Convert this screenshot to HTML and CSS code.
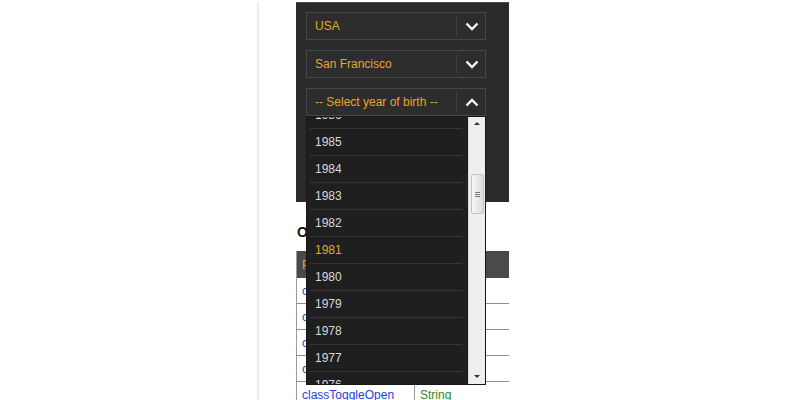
FILE: index.html
```html
<!DOCTYPE html>
<html>
<head>
<meta charset="utf-8">
<link rel="stylesheet" href="styles.css">
</head>
<body>
<div class="page">
  <div class="content">
    <div class="panel">
      <div class="select">
        <span class="value">USA</span>
        <span class="toggle"><svg width="14" height="9" viewBox="0 0 14 9"><polyline points="1.5,1.5 7,7 12.5,1.5" fill="none" stroke="#fff" stroke-width="2.4"/></svg></span>
      </div>
      <div class="select">
        <span class="value">San Francisco</span>
        <span class="toggle"><svg width="14" height="9" viewBox="0 0 14 9"><polyline points="1.5,1.5 7,7 12.5,1.5" fill="none" stroke="#fff" stroke-width="2.4"/></svg></span>
      </div>
      <div class="select open">
        <span class="value">-- Select year of birth --</span>
        <span class="toggle"><svg width="14" height="9" viewBox="0 0 14 9"><polyline points="1.5,7.5 7,2 12.5,7.5" fill="none" stroke="#fff" stroke-width="2.4"/></svg></span>
        <div class="dropdown">
          <div class="list">
            <ul class="items">
              <li>1986</li>
              <li>1985</li>
              <li>1984</li>
              <li>1983</li>
              <li>1982</li>
              <li class="selected">1981</li>
              <li>1980</li>
              <li>1979</li>
              <li>1978</li>
              <li>1977</li>
              <li>1976</li>
              <li>1975</li>
            </ul>
          </div>
          <div class="scrollbar">
            <span class="arrow up"></span>
            <span class="thumb"><span class="grip"></span></span>
            <span class="arrow down"></span>
          </div>
        </div>
      </div>
    </div>
    <h3 class="heading">Options</h3>
    <table class="options">
      <tr><th>Property</th><th>Type</th></tr>
      <tr><td class="name">classContainer</td><td class="type">String</td></tr>
      <tr><td class="name">classDropdown</td><td class="type">String</td></tr>
      <tr><td class="name">classOption</td><td class="type">String</td></tr>
      <tr><td class="name">classSelected</td><td class="type">String</td></tr>
      <tr><td class="name">classToggleOpen</td><td class="type">String</td></tr>
    </table>
  </div>
</div>
</body>
</html>
```

FILE: styles.css
```css
html, body {
  margin: 0;
  padding: 0;
  background: #fff;
  font-family: "Liberation Sans", Arial, sans-serif;
  font-size: 12px;
  height: 400px;
  overflow: hidden;
}

.page {
  margin-left: 257px;
  border-left: 2px solid #ececec;
  height: 400px;
  padding-left: 37px;
}

.content {
  width: 213px;
}

.panel {
  margin-top: 2px;
  height: 200px;
  box-sizing: border-box;
  background: #2b2b2b;
  border-top: 1px solid #4a4a4a;
  padding: 9px 10px 0 10px;
  display: flex;
  flex-direction: column;
  gap: 10px;
}

.select {
  position: relative;
  width: 180px;
  height: 28px;
  box-sizing: border-box;
  border: 1px solid #474747;
  background: #2d2d2d;
  display: flex;
  align-items: center;
}

.select .value {
  flex: 1;
  padding-left: 8px;
  color: #e2a827;
  font-size: 12px;
}

.select .toggle {
  width: 27px;
  height: 20px;
  border-left: 1px solid #3f3f3f;
  display: flex;
  align-items: center;
  justify-content: center;
  padding-left: 1px;
}

.dropdown {
  position: absolute;
  top: 27px;
  left: -1px;
  width: 180px;
  height: 269px;
  box-sizing: border-box;
  border: 1px solid #161616;
  background: #1f1f1f;
  display: flex;
  z-index: 10;
}

.list {
  flex: 1;
  overflow: hidden;
}

.items {
  list-style: none;
  margin: -15px 0 0 0;
  padding: 0;
}

.items li {
  height: 26px;
  line-height: 26px;
  margin: 0 6px 0 3px;
  padding-left: 5px;
  border-bottom: 1px solid #363636;
  color: #d9d9d9;
  font-size: 12px;
}

.items li.selected {
  color: #e2a827;
}

.scrollbar {
  width: 16px;
  background: #efefef;
  border-left: 1px solid #d8d8d8;
  display: flex;
  flex-direction: column;
  align-items: center;
}

.arrow {
  width: 0;
  height: 0;
  border-left: 3px solid transparent;
  border-right: 3px solid transparent;
}

.arrow.up {
  margin-top: 5px;
  border-bottom: 3px solid #333;
}

.arrow.down {
  margin-top: auto;
  margin-bottom: 6px;
  border-top: 3px solid #333;
}

.thumb {
  margin-top: 49px;
  width: 13px;
  height: 40px;
  box-sizing: border-box;
  background: linear-gradient(to right, #f6f6f6, #dcdcdc);
  border: 1px solid #c4c4c4;
  border-radius: 2px;
  display: flex;
  align-items: center;
  justify-content: center;
}

.grip {
  width: 5px;
  height: 5px;
  border-top: 1px solid #777;
  border-bottom: 1px solid #777;
  position: relative;
  box-sizing: border-box;
  background: linear-gradient(#777, #777) center / 5px 1px no-repeat;
}

.heading {
  margin: 22px 0 11px 1px;
  font-size: 14px;
  line-height: 16px;
  font-weight: bold;
  color: #111;
}

.options {
  width: 213px;
  border-collapse: collapse;
  border-left: 1px solid #9a9a9a;
}

.options th {
  height: 27px;
  padding: 0 0 0 5px;
  background: #4a4a4a;
  color: #e2a827;
  text-align: left;
  font-weight: normal;
  font-size: 12px;
}

.options td {
  height: 25px;
  padding: 0 0 0 5px;
  border-bottom: 1px solid #8f8f8f;
  font-size: 12px;
}

.options td.name {
  width: 112px;
  color: #2342d6;
  border-right: 1px solid #9a9a9a;
}

.options td.type {
  color: #2e8b2e;
}
```
